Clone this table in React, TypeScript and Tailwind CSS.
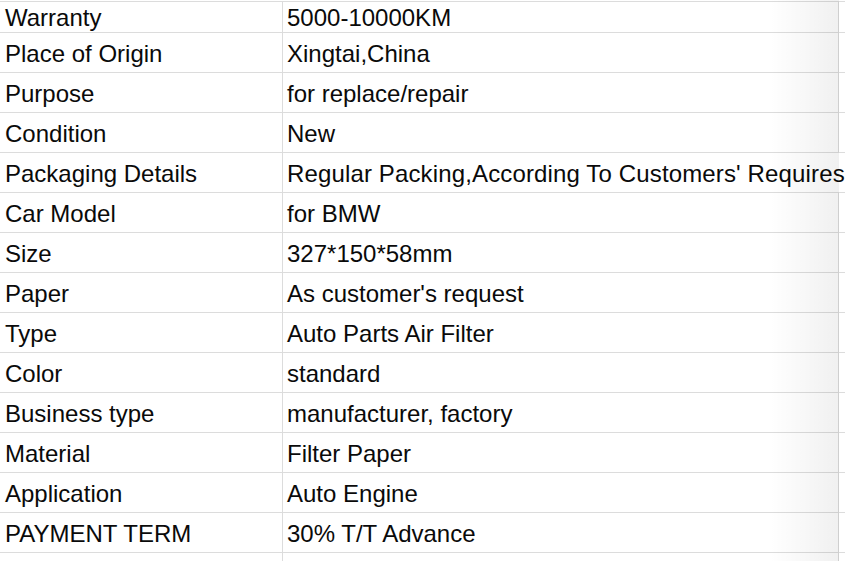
import React from "react";

const rows: [string, string][] = [
  ["Warranty", "5000-10000KM"],
  ["Place of Origin", "Xingtai,China"],
  ["Purpose", "for replace/repair"],
  ["Condition", "New"],
  ["Packaging Details", "Regular Packing,According To Customers' Requires"],
  ["Car Model", "for BMW"],
  ["Size", "327*150*58mm"],
  ["Paper", "As customer's request"],
  ["Type", "Auto Parts Air Filter"],
  ["Color", "standard"],
  ["Business type", "manufacturer, factory"],
  ["Material", "Filter Paper"],
  ["Application", "Auto Engine"],
  ["PAYMENT TERM", "30% T/T Advance"],
];

export default function App() {
  return (
    <div
      className="relative w-[845px] h-[561px] overflow-hidden bg-white pt-[1px] text-[#0a0a0a]"
      style={{ fontFamily: '"Liberation Sans", Arial, sans-serif' }}
    >
      <div className="border-t border-[#dcdcdc] flex flex-col">
        {rows.map(([k, v], i) => (
          <div
            key={k}
            className={`flex border-b border-[#dcdcdc] ${i === 0 ? "h-[31px]" : "h-[40px]"}`}
          >
            <div className="w-[283px] shrink-0 border-r border-[#dcdcdc] flex items-center pl-[5px] pt-[2px] text-[24px] leading-none whitespace-nowrap">
              {k}
            </div>
            <div
              className={`shrink-0 flex items-center pl-[4px] pt-[2px] text-[24px] leading-none whitespace-nowrap ${
                v.length > 40
                  ? "relative z-10 bg-white w-[562px] tracking-[0.14px]"
                  : "w-[556px] border-r border-[#dcdcdc]"
              }`}
            >
              {v}
            </div>
            {v.length > 40 ? null : <div className="flex-1" />}
          </div>
        ))}
        <div className="flex h-[20px]">
          <div className="w-[283px] shrink-0 border-r border-[#dcdcdc]" />
          <div className="w-[556px] shrink-0 border-r border-[#dcdcdc]" />
        </div>
      </div>
      <div className="pointer-events-none absolute top-0 bottom-0 left-[770px] w-[69px] z-20 bg-gradient-to-r from-transparent to-[rgba(0,0,0,0.06)]" />
    </div>
  );
}
